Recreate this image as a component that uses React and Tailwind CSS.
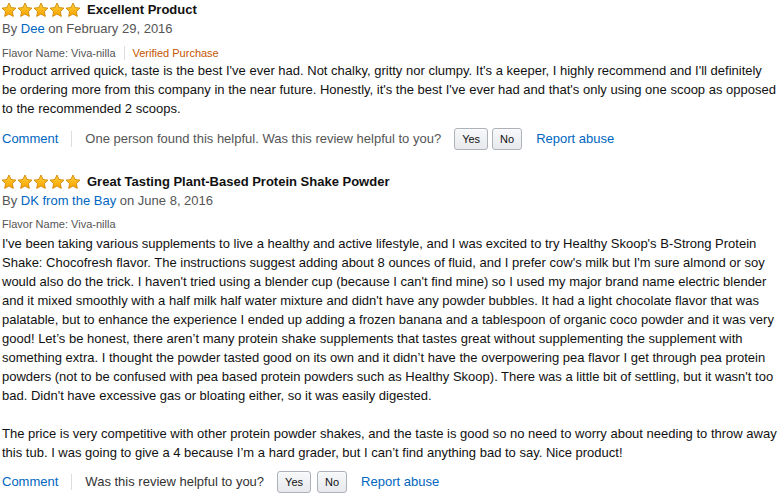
import React from "react";

const review1 = [
  "Product arrived quick, taste is the best I've ever had. Not chalky, gritty nor clumpy. It's a keeper, I highly recommend and I'll definitely",
  "be ordering more from this company in the near future. Honestly, it's the best I've ever had and that's only using one scoop as opposed",
  "to the recommended 2 scoops.",
];

const review2 = [
  "I've been taking various supplements to live a healthy and active lifestyle, and I was excited to try Healthy Skoop's B-Strong Protein",
  "Shake: Chocofresh flavor. The instructions suggest adding about 8 ounces of fluid, and I prefer cow's milk but I'm sure almond or soy",
  "would also do the trick. I haven't tried using a blender cup (because I can't find mine) so I used my major brand name electric blender",
  "and it mixed smoothly with a half milk half water mixture and didn't have any powder bubbles. It had a light chocolate flavor that was",
  "palatable, but to enhance the experience I ended up adding a frozen banana and a tablespoon of organic coco powder and it was very",
  "good! Let’s be honest, there aren’t many protein shake supplements that tastes great without supplementing the supplement with",
  "something extra. I thought the powder tasted good on its own and it didn’t have the overpowering pea flavor I get through pea protein",
  "powders (not to be confused with pea based protein powders such as Healthy Skoop). There was a little bit of settling, but it wasn't too",
  "bad. Didn't have excessive gas or bloating either, so it was easily digested.",
  "",
  "The price is very competitive with other protein powder shakes, and the taste is good so no need to worry about needing to throw away",
  "this tub. I was going to give a 4 because I’m a hard grader, but I can’t find anything bad to say. Nice product!",
];

function Star() {
  return (
    <svg width="16" height="16" viewBox="0 0 24 24">
      <defs>
        <linearGradient id="sg" x1="0" y1="0" x2="0" y2="1">
          <stop offset="0" stopColor="#ffcf3a" />
          <stop offset="1" stopColor="#f8a300" />
        </linearGradient>
      </defs>
      <path
        d="M12 1.5l3.2 6.8 7.3.9-5.4 5.1 1.4 7.3L12 18l-6.5 3.6 1.4-7.3L1.5 9.2l7.3-.9z"
        fill="url(#sg)"
        stroke="#d08400"
        strokeWidth="1.3"
        strokeLinejoin="round"
      />
    </svg>
  );
}

function Stars() {
  return (
    <div className="flex -ml-[1px]">
      <Star />
      <Star />
      <Star />
      <Star />
      <Star />
    </div>
  );
}

function Btn({ children }) {
  return (
    <button className="h-[22px] px-[7px] rounded-[3px] border border-[#adb1b8] bg-gradient-to-b from-[#f7f8fa] to-[#e7e9ec] text-[11px] text-[#111] leading-none shadow-[0_1px_0_rgba(255,255,255,0.6)_inset]">
      {children}
    </button>
  );
}

function Actions({ helpful, gap }) {
  return (
    <div className="h-[22px] flex items-center">
      <span className="text-[#0066c0]">Comment</span>
      <span className="ml-[13px] mr-[13px] h-[16px] w-px bg-[#ddd]" />
      <span className={helpful ? "text-[#555]" : "text-[#333]"}>
        {helpful ? "One person found this helpful. Was this review helpful to you?" : "Was this review helpful to you?"}
      </span>
      <span className={`ml-[13px] flex ${gap}`}>
        <Btn>Yes</Btn>
        <Btn>No</Btn>
      </span>
      <span className="ml-[14px] text-[#0066c0]">Report abuse</span>
    </div>
  );
}

export default function App() {
  return (
    <div
      className="w-[782px] h-[493px] bg-white overflow-hidden pl-[2px] text-[13px] text-[#111]"
      style={{ fontFamily: '"Liberation Sans", Arial, sans-serif' }}
    >
      {/* review 1 */}
      <div className="flex items-center gap-[6px] h-[19px]">
        <Stars />
        <span className="font-bold">Excellent Product</span>
      </div>
      <div className="h-[19px] leading-[19px] text-[#555]">
        By <span className="text-[#0066c0]">Dee</span> on February 29, 2016
      </div>
      <div className="mt-[6px] h-[18px] leading-[18px] text-[11px] flex items-center">
        <span className="text-[#555]">Flavor Name: Viva-nilla</span>
        <span className="mx-[8px] h-[14px] w-px bg-[#ddd]" />
        <span className="text-[#c45500]">Verified Purchase</span>
      </div>
      <div className="-mt-[1px] leading-[19px]">
        {review1.map((l, i) => (
          <div key={i} className="h-[19px] whitespace-nowrap">
            {l}
          </div>
        ))}
      </div>
      <div className="mt-[10px]">
        <Actions helpful gap="gap-[4px]" />
      </div>

      {/* review 2 */}
      <div className="mt-[22px] flex items-center gap-[6px] h-[19px]">
        <Stars />
        <span className="font-bold">Great Tasting Plant-Based Protein Shake Powder</span>
      </div>
      <div className="h-[19px] leading-[19px] text-[#555]">
        By <span className="text-[#0066c0]">DK from the Bay</span> on June 8, 2016
      </div>
      <div className="mt-[5px] h-[18px] leading-[18px] text-[11px] text-[#555]">Flavor Name: Viva-nilla</div>
      <div className="mt-[1px] leading-[19px]">
        {review2.map((l, i) => (
          <div key={i} className="h-[19px] whitespace-nowrap">
            {l}
          </div>
        ))}
      </div>
      <div className="mt-[9px]">
        <Actions gap="gap-[6px]" />
      </div>
    </div>
  );
}
